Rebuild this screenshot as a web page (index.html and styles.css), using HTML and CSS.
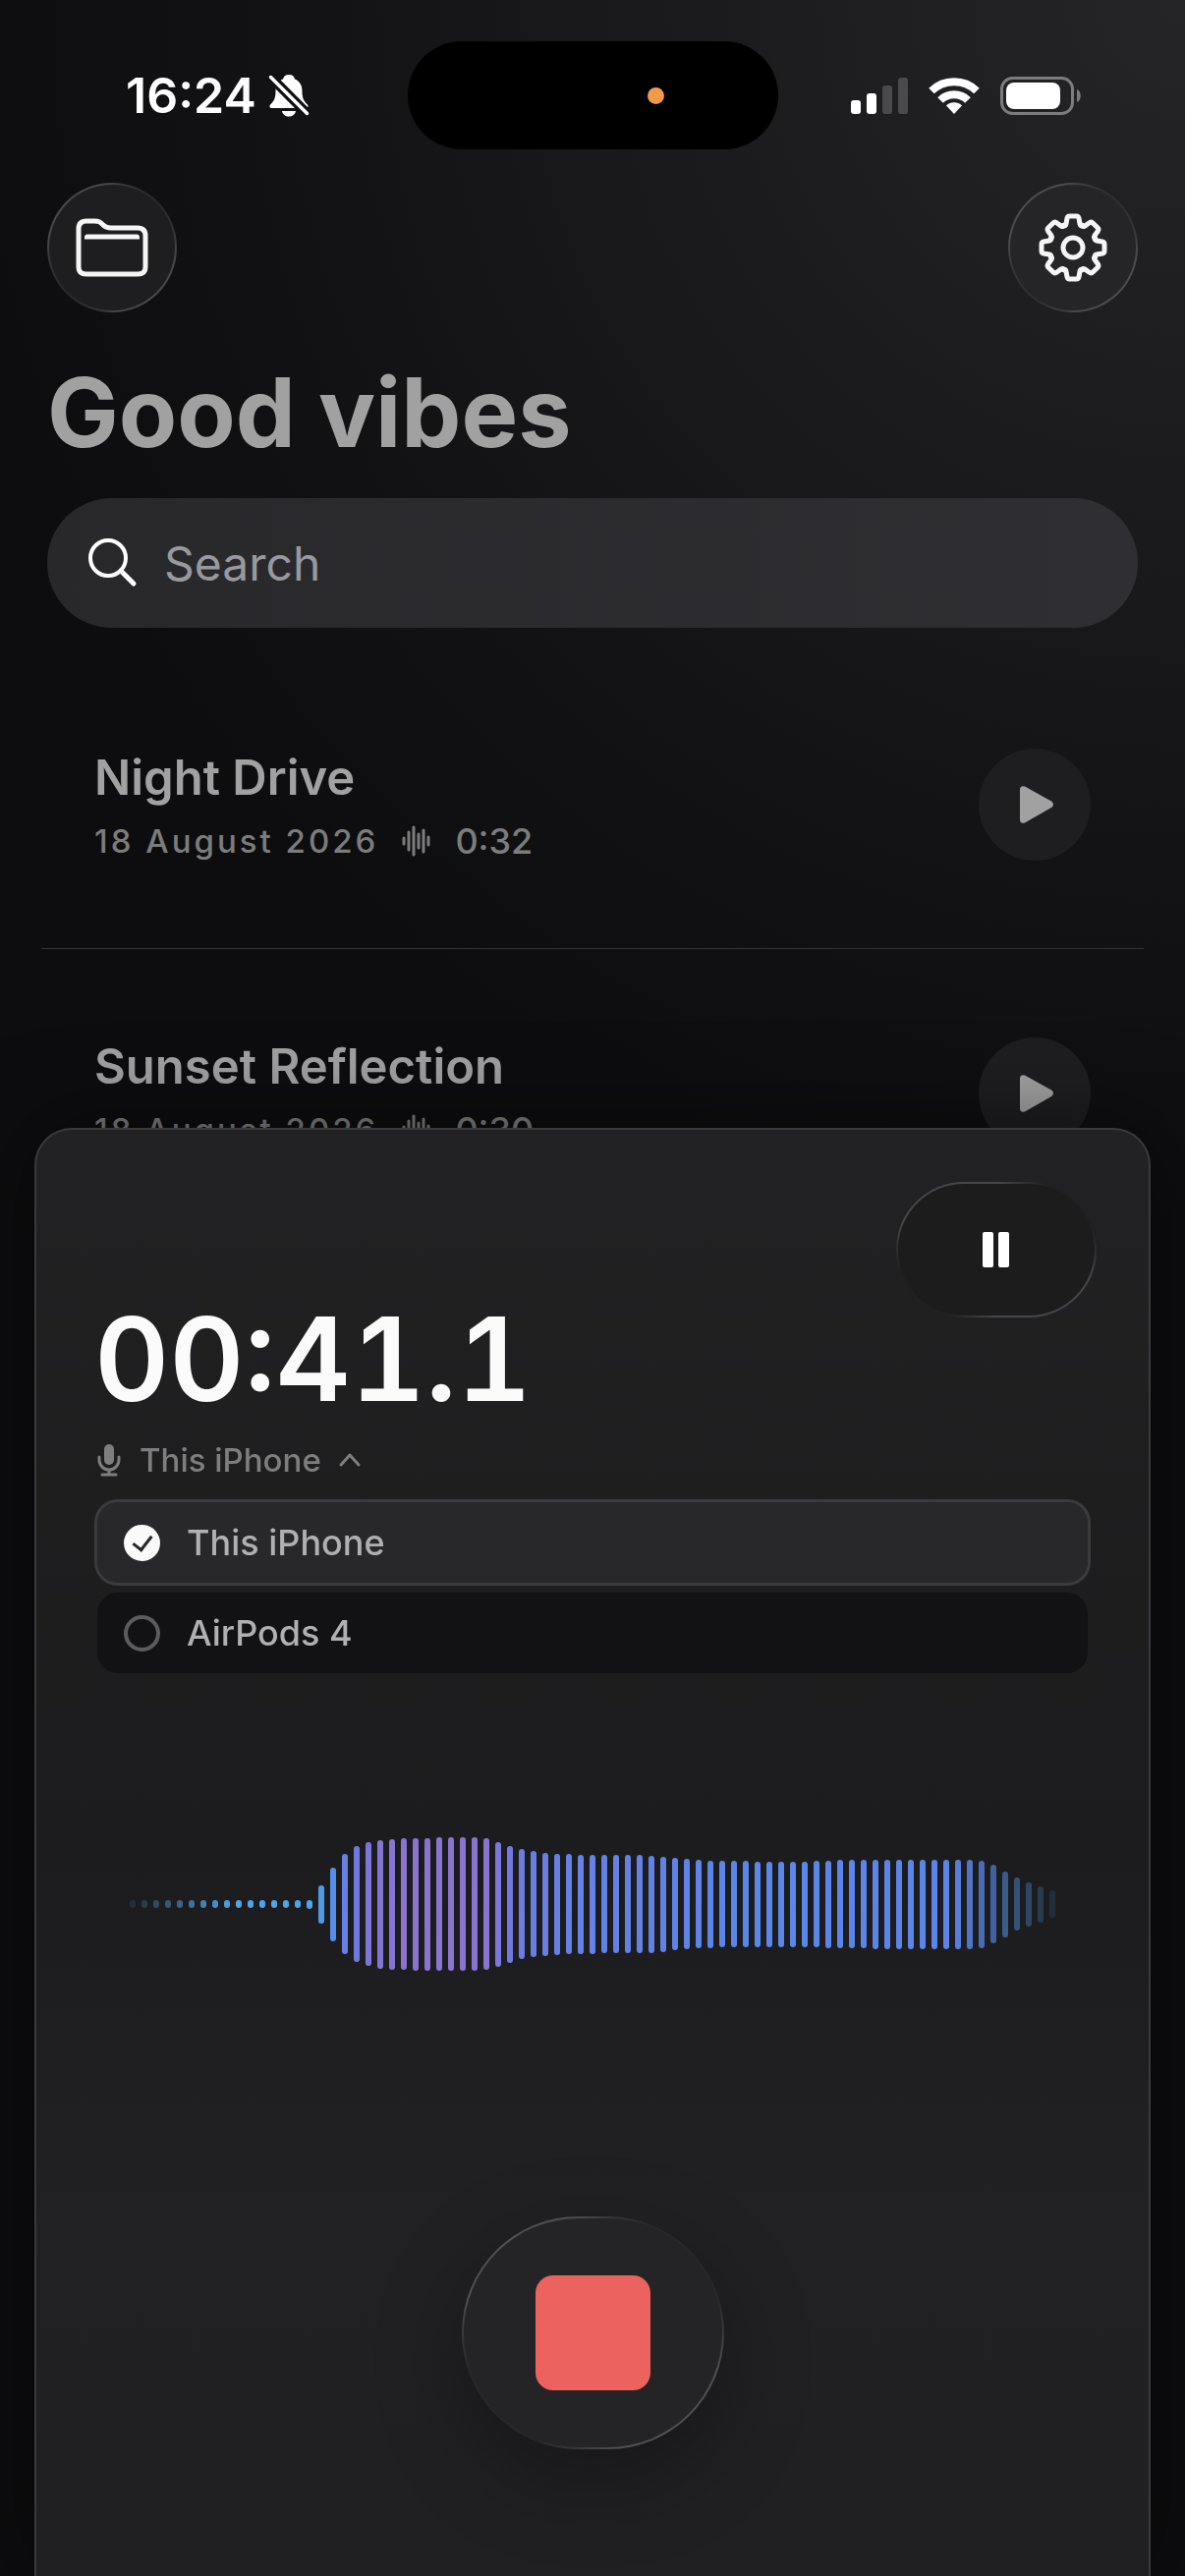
FILE: index.html
```html
<!DOCTYPE html>
<html lang="en">
  <head>
    <meta charset="utf-8">
    <meta name="viewport" content="width=device-width, initial-scale=1">
    <title>Good vibes</title>
    <link rel="stylesheet" href="styles.css">
  </head>
  <body>
    <div class="status-bar">
      <div class="status-left">
        <span class="clock">16:24</span>
        <svg width="42" height="44" viewBox="0 0 42 44" fill="#fff">
          <path d="M21 1c3.500 0 5.500 2 6 4.500 5 2 7.500 6.500 7.500 12 0 8 2 10.500 5 13.500 1.500 1.500 1.500 4-1 4H3.500c-2.500 0-2.500-2.500-1-4 3-3 5-5.500 5-13.500 0-5.500 2.500-10 7.500-12C15.500 3 17.500 1 21 1zM14 38h14c-.5 3.500-3.500 5.500-7 5.500s-6.500-2-7-5.500z"/>
          <path d="M2 3l38 38" stroke="#101012" stroke-width="10"/>
          <path d="M2.500 3.500l37 37" stroke="#fff" stroke-width="3.500" stroke-linecap="round"/>
        </svg>
      </div>
      <div class="island"><span class="island-dot"></span></div>
      <div class="status-right">
        <svg width="58" height="37" viewBox="0 0 58 37" fill="#fff">
          <rect x="0" y="23" width="10" height="14" rx="3"/>
          <rect x="16" y="16" width="10" height="21" rx="3"/>
          <rect x="32" y="8" width="10" height="29" rx="3" fill="#4a4a4c"/>
          <rect x="48" y="0" width="10" height="37" rx="3" fill="#4a4a4c"/>
        </svg>
        <svg width="52" height="37" viewBox="0 0 52 37" fill="none" stroke="#fff" stroke-width="8">
          <path d="M3 13.500a33 33 0 0 1 46 0"/>
          <path d="M12 23a20 20 0 0 1 28 0"/>
          <path d="M26 37l-8-8.500a11.500 11.500 0 0 1 16 0z" fill="#fff" stroke="none"/>
        </svg>
        <svg width="82" height="39" viewBox="0 0 82 39">
          <rect x="1.500" y="1.500" width="72" height="36" rx="11" fill="none" stroke="#7c7c7e" stroke-width="3"/>
          <rect x="6" y="6" width="55" height="27" rx="8" fill="#fff"/>
          <path d="M78 13c5 2 5 11 0 13z" fill="#7c7c7e"/>
        </svg>
      </div>
    </div>

    <div class="toolbar">
      <button class="round-btn" type="button" aria-label="Folders">
        <svg width="74" height="60" viewBox="0 0 74 60" fill="none" stroke="#f5f5f5" stroke-width="5">
          <path d="M3 50V11q0-8 8-8h8c5 0 6 1 9 4s5 3 8 3h27q8 0 8 8v32q0 7-8 7H11q-8 0-8-7z"/>
          <path d="M9 21.500v-2q0-3 3-3h50q3 0 3 3v2z" fill="#f5f5f5" stroke="none"/>
        </svg>
      </button>
      <button class="round-btn settings-btn" type="button" aria-label="Settings">
        <svg width="70" height="70" viewBox="-35 -35 70 70" fill="none" stroke="#f5f5f5" stroke-width="5" stroke-linecap="round">
          <defs>
            <path id="tooth" d="M-9.400-22.600Q-7.600-21.600-7-24L-6-30Q-5.500-32-3.500-32H3.500Q5.500-32 6-30L7-24Q7.600-21.600 9.400-22.600"/>
          </defs>
          <use href="#tooth"/>
          <use href="#tooth" transform="rotate(45)"/>
          <use href="#tooth" transform="rotate(90)"/>
          <use href="#tooth" transform="rotate(135)"/>
          <use href="#tooth" transform="rotate(180)"/>
          <use href="#tooth" transform="rotate(225)"/>
          <use href="#tooth" transform="rotate(270)"/>
          <use href="#tooth" transform="rotate(315)"/>
          <circle r="10"/>
        </svg>
      </button>
    </div>

    <h1>Good vibes</h1>

    <label class="search">
      <svg width="50" height="50" viewBox="0 0 50 50" fill="none" stroke="#fff" stroke-linecap="round">
        <circle cx="20" cy="20" r="18" stroke-width="4"/>
        <path d="M33 33l13 13" stroke-width="5"/>
      </svg>
      <input type="search" placeholder="Search" aria-label="Search">
    </label>

    <ul class="recordings">
      <li class="recording">
        <div class="info">
          <h2>Night Drive</h2>
          <div class="meta">
            <span class="date">18 August 2026</span>
            <svg width="30" height="32" viewBox="0 0 30 32" fill="none" stroke="#7c7c7c" stroke-width="3" stroke-linecap="round">
              <path d="M2 13v6M7 7v18M12 2v28M17 9v14M22 5v22M27 12v8"/>
            </svg>
            <span class="length">0:32</span>
          </div>
        </div>
        <button class="play" type="button" aria-label="Play Night Drive">
          <svg width="36" height="40" viewBox="0 0 36 40" fill="#a1a1a1">
            <path d="M1 5q0-5 5-3.500L33 16.500q4 3 0 6.500L6 38.500q-5 1.500-5-3.500z"/>
          </svg>
        </button>
      </li>
      <li class="recording">
        <div class="info">
          <h2>Sunset Reflection</h2>
          <div class="meta">
            <span class="date">18 August 2026</span>
            <svg width="30" height="32" viewBox="0 0 30 32" fill="none" stroke="#7c7c7c" stroke-width="3" stroke-linecap="round">
              <path d="M2 13v6M7 7v18M12 2v28M17 9v14M22 5v22M27 12v8"/>
            </svg>
            <span class="length">0:30</span>
          </div>
        </div>
        <button class="play" type="button" aria-label="Play Sunset Reflection">
          <svg width="36" height="40" viewBox="0 0 36 40" fill="#a1a1a1">
            <path d="M1 5q0-5 5-3.500L33 16.500q4 3 0 6.500L6 38.500q-5 1.500-5-3.500z"/>
          </svg>
        </button>
      </li>
    </ul>

    <section class="recorder">
      <button class="pause" type="button" aria-label="Pause">
        <svg width="28" height="36" viewBox="0 0 28 36" fill="#fff">
          <rect width="11" height="36" rx="2"/>
          <rect x="16" width="11" height="36" rx="2"/>
        </svg>
      </button>

      <div class="recorder-body">
        <div class="timer">00:41.1</div>
        <button class="source" type="button">
          <svg width="26" height="34" viewBox="0 0 26 34" fill="none" stroke="#7e7e7e" stroke-width="3" stroke-linecap="round">
            <rect x="8" y="1" width="10" height="21" rx="5" fill="#7e7e7e" stroke="none"/>
            <path d="M3 14v3a10 10 0 0 0 20 0v-3M13 27v5M6 32h14"/>
          </svg>
          This iPhone
          <svg width="22" height="14" viewBox="0 0 22 14" fill="none" stroke="#7e7e7e" stroke-width="3" stroke-linecap="round" stroke-linejoin="round">
            <path d="M2 12l9-10 9 10"/>
          </svg>
        </button>
        <div class="inputs">
          <label class="input-option">
            <input type="radio" name="mic" checked>
            This iPhone
          </label>
          <label class="input-option">
            <input type="radio" name="mic">
            AirPods 4
          </label>
        </div>
      </div>

      <div class="waveform" id="waveform"></div>

      <button class="stop" type="button" aria-label="Stop recording">
        <span class="stop-icon"></span>
      </button>
    </section>

    <script src="script.js"></script>
  </body>
</html>
```
FILE: styles.css
```css
* {
  box-sizing: border-box;
}

body {
  margin: 0;
  min-height: 100vh;
  overflow: hidden;
  font-family: Inter, "Liberation Sans", sans-serif;
  color: #a1a1a1;
  background:
    radial-gradient(circle 1250px at 100% 0, #252527, #1b1b1d 40%, #131315 70%, rgba(13, 13, 15, 0)),
    #0d0d0f;
}

button {
  display: flex;
  align-items: center;
  justify-content: center;
  padding: 0;
  border: none;
  font-family: inherit;
  cursor: pointer;
}

svg {
  flex: none;
}

/* status bar */

.status-bar {
  display: grid;
  grid-template-columns: 1fr 377px 1fr;
  align-items: center;
  padding-top: 42px;
}

.status-left {
  display: flex;
  align-items: center;
  gap: 12px;
  padding-left: 128px;
}

.clock {
  font-size: 50px;
  font-weight: 600;
  line-height: 60px;
  color: #fff;
}

.island {
  display: flex;
  align-items: center;
  justify-content: flex-end;
  height: 110px;
  padding-right: 116px;
  border-radius: 55px;
  background-color: #000;
}

.island-dot {
  width: 17px;
  height: 17px;
  border-radius: 50%;
  background-color: #f19a4b;
}

.status-right {
  display: flex;
  align-items: center;
  justify-content: flex-end;
  gap: 21px;
  padding-right: 106px;
}

/* header */

.toolbar {
  display: flex;
  justify-content: space-between;
  margin-top: 34px;
  padding: 0 48px;
}

.round-btn {
  width: 132px;
  height: 132px;
  border: 2px solid transparent;
  border-radius: 50%;
  background:
    linear-gradient(#1e1e20, #1e1e20) padding-box,
    linear-gradient(45deg, #29292b 15%, #47474d 28%, #47474d 72%, #29292b 85%) border-box;
}

.settings-btn {
  background:
    linear-gradient(#252527, #252527) padding-box,
    linear-gradient(45deg, #2e2e30 15%, #4b4b51 28%, #4b4b51 72%, #2e2e30 85%) border-box;
}

h1 {
  margin: 42px 48px 0;
  font-size: 97px;
  font-weight: 700;
  line-height: 120px;
}

.search {
  display: flex;
  align-items: center;
  gap: 27px;
  height: 132px;
  margin: 27px 48px 0;
  padding: 0 42px;
  border-radius: 66px;
  background: linear-gradient(90deg, #28282b, #2f2f33);
}

.search input {
  flex: 1;
  min-width: 0;
  padding: 0;
  border: none;
  outline: none;
  background: none;
  font-family: inherit;
  font-size: 48px;
  color: #fff;
}

.search input::placeholder {
  color: #98989f;
}

/* recordings */

.recordings {
  margin: 33px 42px 0;
  padding: 0;
  list-style: none;
}

.recording {
  display: flex;
  align-items: center;
  justify-content: space-between;
  height: 294px;
  padding: 0 54px;
  border-bottom: 1px solid #323234;
}

.info h2 {
  margin: 0 0 14px;
  font-size: 49px;
  font-weight: 600;
  line-height: 60px;
}

.meta {
  display: flex;
  align-items: center;
  gap: 24px;
  line-height: 40px;
  color: #7c7c7c;
}

.date {
  font-size: 33px;
  font-weight: 500;
  letter-spacing: 3px;
}

.length {
  font-size: 36px;
  font-weight: 500;
}

.play {
  width: 114px;
  height: 114px;
  padding-left: 4px;
  border-radius: 50%;
  background-color: #1e1e20;
}

/* recorder sheet */

.recorder {
  position: fixed;
  right: 35px;
  bottom: 0;
  left: 35px;
  display: flex;
  flex-direction: column;
  padding: 53px 53px 129px;
  border: 2px solid #3a3a3c;
  border-bottom: none;
  border-radius: 38px 38px 0 0;
  background: linear-gradient(#222224, #1e1e1f 25%, #1c1c1e 50%, #212123 75%, #202022);
  box-shadow: 0 0 90px rgba(0, 0, 0, 0.5);
}

.pause {
  align-self: flex-end;
  width: 204px;
  height: 138px;
  border: 2px solid transparent;
  border-radius: 69px;
  background:
    linear-gradient(#1c1c1c, #1c1c1c) padding-box,
    linear-gradient(45deg, #202022 15%, #47474a 30%, #47474a 70%, #202022 85%) border-box;
}

.recorder-body {
  padding: 0 6px;
}

.timer {
  font-size: 118px;
  font-weight: 600;
  line-height: 84px;
  font-variant-numeric: tabular-nums;
  color: #fbfbfb;
}

.source {
  gap: 18px;
  height: 40px;
  margin: 41px 0 20px;
  padding-left: 2px;
  background: none;
  font-size: 33px;
  font-weight: 500;
  color: #7e7e7e;
}

.inputs {
  display: flex;
  flex-direction: column;
  gap: 4px;
}

.input-option {
  display: flex;
  align-items: center;
  gap: 27px;
  height: 88px;
  padding: 0 27px;
  border: 3px solid transparent;
  border-radius: 24px;
  background-color: #121214;
  background-clip: padding-box;
  font-size: 36px;
  font-weight: 500;
  color: #b0b0b0;
}

.input-option:has(input:checked) {
  border-color: #3b3b3d;
  background-color: #28282a;
}

.input-option input {
  appearance: none;
  display: grid;
  place-items: center;
  width: 37px;
  height: 37px;
  margin: 0;
  border: 4px solid #5c5c5d;
  border-radius: 50%;
}

.input-option input:checked {
  border-color: #fafafa;
  background-color: #fafafa;
}

.input-option input:checked::after {
  content: "";
  width: 9px;
  height: 16px;
  margin-bottom: 4px;
  border: solid #28282a;
  border-width: 0 3px 3px 0;
  transform: rotate(38deg);
}

.waveform {
  display: flex;
  align-items: center;
  justify-content: center;
  gap: 6px;
  height: 136px;
  margin: 164px 0 250px;
}

.bar {
  width: 6px;
  border-radius: 3px;
}

.stop {
  align-self: center;
  width: 267px;
  height: 237px;
  border: 2px solid transparent;
  border-radius: 119px;
  background:
    linear-gradient(#242426, #242426) padding-box,
    linear-gradient(45deg, #272729 17%, #505053 32%, #505053 68%, #272729 83%) border-box;
  box-shadow: 0 30px 90px rgba(0, 0, 0, 0.3);
}

.stop-icon {
  width: 117px;
  height: 117px;
  border-radius: 18px;
  background-color: #ec625f;
}
```
FILE: script.js
```js
var levels = [
  8, 8, 8, 8, 8, 8, 8, 8, 8, 8, 8, 8, 8, 8, 8, 9,
  39, 75, 102, 118, 126, 131, 133, 134, 135, 135, 136, 136, 136, 136, 134, 127,
  119, 112, 108, 105, 103, 102, 101, 101, 100, 100, 100, 100, 99, 97, 94, 92,
  90, 89, 88, 88, 88, 87, 87, 87, 87, 87, 88, 89, 90, 90, 90, 91,
  91, 91, 91, 91, 91, 91, 91, 91, 89, 80, 67, 54, 45, 37, 28
];

// level -> colour, from quiet blue to loud purple
var stops = [
  [0, [79, 166, 230]],
  [39, [81, 153, 232]],
  [75, [85, 141, 232]],
  [90, [91, 133, 232]],
  [100, [100, 130, 228]],
  [118, [112, 121, 222]],
  [127, [124, 119, 218]],
  [134, [138, 116, 208]],
  [200, [138, 116, 208]]
];

function barColor(level) {
  var i = 1;
  while (stops[i][0] < level) i++;
  var a = stops[i - 1];
  var b = stops[i];
  var t = (level - a[0]) / (b[0] - a[0]);
  var rgb = a[1].map(function (c, k) {
    return Math.round(c + (b[1][k] - c) * t);
  });
  return "rgb(" + rgb.join(",") + ")";
}

var waveform = document.getElementById("waveform");

levels.forEach(function (level, i) {
  var edge = Math.min(i, levels.length - 1 - i);
  var bar = document.createElement("span");
  bar.className = "bar";
  bar.style.height = level + "px";
  bar.style.backgroundColor = barColor(level);
  bar.style.opacity = Math.min(1, 0.14 + edge * 0.1);
  waveform.appendChild(bar);
});
```
